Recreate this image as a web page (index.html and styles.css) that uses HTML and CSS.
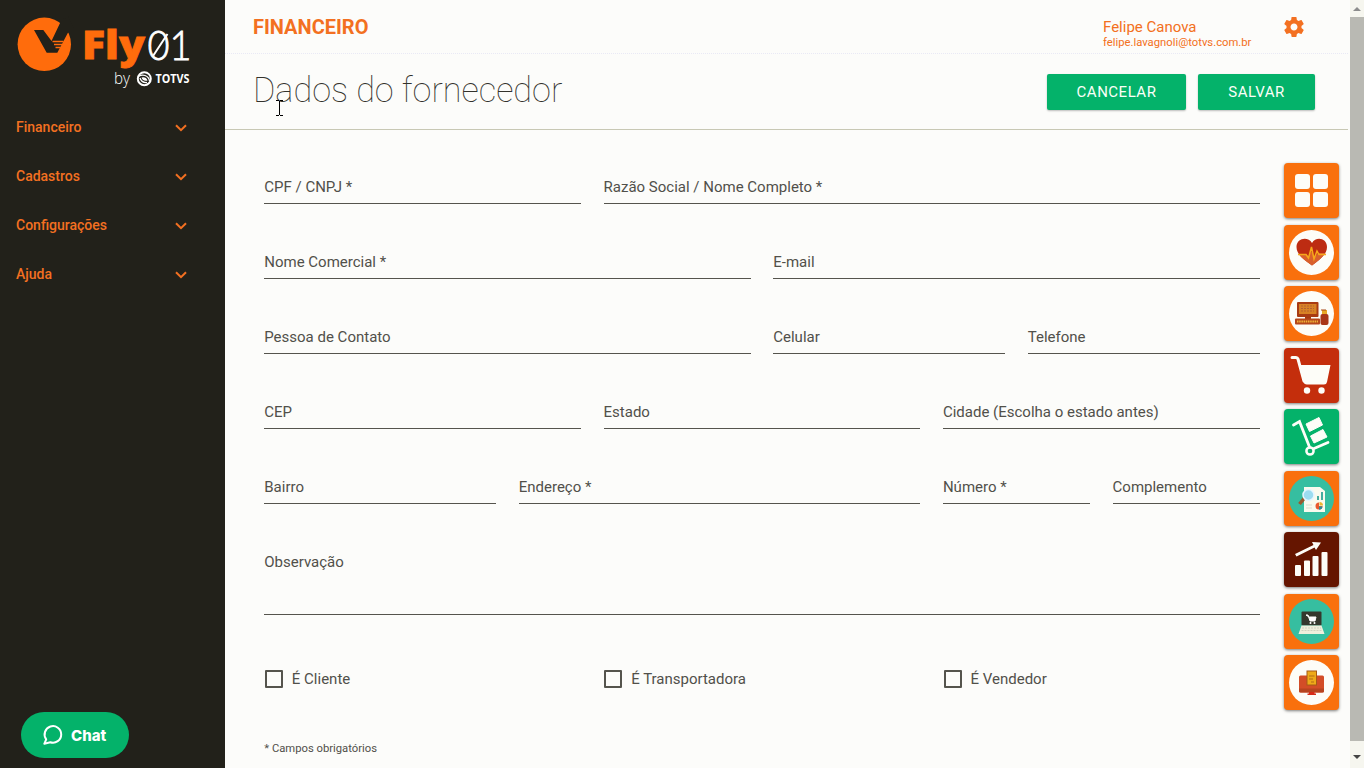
FILE: index.html
```html
<!DOCTYPE html>
<html lang="pt-BR">
<head>
<meta charset="utf-8">
<title>Fly01 Financeiro</title>
<link rel="stylesheet" href="styles.css">
</head>
<body>
<aside class="sidebar">
  <svg class="logo" viewBox="0 0 225 102" width="225" height="102">
    <circle cx="44.300" cy="44.300" r="26.700" fill="#ff6c0c"/>
    <path d="M34 30H43.300L51.500 41L61 21L68 16L74 28L67.800 33L57.300 52.700H46.700z" fill="#22211a"/>
    <path d="M52.500 41.500H63.500M54 44.500H62M55.500 47.500H60.500" stroke="#ff6c0c" stroke-width="1.400"/>
    <text class="logo-fly" x="82" y="59" textLength="63" lengthAdjust="spacingAndGlyphs">Fly</text>
    <text class="logo-num" x="147.500" y="60" textLength="44" lengthAdjust="spacingAndGlyphs">01</text>
    <path d="M153 56L167.500 34" stroke="#fff" stroke-width="2"/>
    <text class="logo-by" x="114" y="84" textLength="16" lengthAdjust="spacingAndGlyphs">by</text>
    <circle cx="144.300" cy="78.700" r="6.500" fill="none" stroke="#fff" stroke-width="2"/>
    <path d="M138.500 76.500Q141.500 74.500 145 75.500Q149 77 149.500 81M140 78Q141.500 83 147 82.500" fill="none" stroke="#fff" stroke-width="1.300"/>
    <path d="M141.500 77.500Q146 76.500 147.500 80.500Q143 81.500 141.500 77.500z" fill="#fff"/>
    <text class="logo-totvs" x="155.500" y="82.500" textLength="34" lengthAdjust="spacingAndGlyphs">TOTVS</text>
  </svg>
  <nav class="menu">
    <a class="menu-item">Financeiro<svg class="chev" viewBox="0 0 12 8"><path d="M1 1.200L6 6.200L11 1.200"/></svg></a>
    <a class="menu-item">Cadastros<svg class="chev" viewBox="0 0 12 8"><path d="M1 1.200L6 6.200L11 1.200"/></svg></a>
    <a class="menu-item">Configurações<svg class="chev" viewBox="0 0 12 8"><path d="M1 1.200L6 6.200L11 1.200"/></svg></a>
    <a class="menu-item">Ajuda<svg class="chev" viewBox="0 0 12 8"><path d="M1 1.200L6 6.200L11 1.200"/></svg></a>
  </nav>
  <button class="chat"><svg width="22" height="22" viewBox="0 0 22 22"><path d="M4.200 15.300A8.300 8.300 0 1 1 8.300 18.300L2.300 19.800z" fill="none" stroke="#fff" stroke-width="2" stroke-linejoin="round"/></svg>Chat</button>
</aside>
<main class="main">
  <header class="topbar">
    <span class="module">FINANCEIRO</span>
    <div class="user"><span class="user-name">Felipe Canova</span><span class="user-mail">felipe.lavagnoli@totvs.com.br</span></div>
    <svg class="gear" viewBox="0 0 24 24"><path d="M19.430 12.980c.04-.32.07-.64.07-.98s-.03-.66-.07-.98l2.110-1.650c.19-.15.24-.42.12-.64l-2-3.460c-.12-.22-.39-.3-.61-.22l-2.490 1c-.52-.4-1.080-.73-1.690-.98l-.38-2.650C14.460 2.180 14.250 2 14 2h-4c-.25 0-.46.18-.49.42l-.38 2.650c-.61.25-1.170.59-1.690.98l-2.490-1c-.23-.09-.49 0-.61.22l-2 3.460c-.13.22-.07.49.12.64l2.110 1.650c-.04.32-.07.65-.07.98s.03.66.07.98l-2.110 1.650c-.19.15-.24.42-.12.64l2 3.460c.12.22.39.3.61.22l2.490-1c.52.4 1.080.73 1.690.98l.38 2.650c.03.24.24.42.49.42h4c.25 0 .46-.18.49-.42l.38-2.650c.61-.25 1.170-.59 1.690-.98l2.490 1c.23.09.49 0 .61-.22l2-3.460c.12-.22.07-.49-.12-.64l-2.110-1.650zM12 15.500c-1.930 0-3.500-1.570-3.500-3.500s1.570-3.500 3.500-3.500 3.500 1.570 3.500 3.500-1.570 3.500-3.500 3.500z"/></svg>
  </header>
  <section class="titlebar">
    <h1>Dados do fornecedor</h1>
    <div class="actions"><button class="btn cancel">CANCELAR</button><button class="btn save">SALVAR</button></div>
    <svg class="cursor" width="7" height="16" viewBox="0 0 7 16"><path d="M0 .5H3M4 .5H7M3.500 1V15M0 15.500H3M4 15.500H7"/></svg>
  </section>
  <div class="content">
    <form class="form">
      <label class="field s4">CPF / CNPJ *</label><label class="field s8">Razão Social / Nome Completo *</label>
      <label class="field s6">Nome Comercial *</label><label class="field s6">E-mail</label>
      <label class="field s6">Pessoa de Contato</label><label class="field s3">Celular</label><label class="field s3">Telefone</label>
      <label class="field s4">CEP</label><label class="field s4">Estado</label><label class="field s4">Cidade (Escolha o estado antes)</label>
      <label class="field s3">Bairro</label><label class="field s5">Endereço *</label><label class="field s2">Número *</label><label class="field s2">Complemento</label>
      <label class="field s12 area">Observação</label>
      <label class="check s4"><i class="box"></i>É Cliente</label><label class="check s4"><i class="box"></i>É Transportadora</label><label class="check s4"><i class="box"></i>É Vendedor</label>
      <small class="note s12">* Campos obrigatórios</small>
    </form>
    <div class="tiles">
      <svg class="tile orange" viewBox="0 0 55 55"><g fill="#fdfdf8"><rect x="11" y="11" width="15" height="15" rx="3"/><rect x="29" y="11" width="15" height="15" rx="3"/><rect x="11" y="29" width="15" height="15" rx="3"/><rect x="29" y="29" width="15" height="15" rx="3"/></g></svg>
      <svg class="tile orange" viewBox="0 0 55 55"><circle cx="27.500" cy="27.500" r="22.500" fill="#fdfdf8"/><path d="M28 40.500C21 35 12.500 30 12.500 22C12.500 13 24 11 28 18C32 11 43 13 43 22C43 30 35 35 28 40.500z" fill="#bd2c12"/><path d="M14.500 29H22L25 32L27 26L31 32L34 28H41.500Q37 34 28 40.500Q18 34 14.500 29z" fill="#d9602c"/><path d="M14 29.500H22L24.500 33L27.500 22L30 34L33 26L35 29.500H42" fill="none" stroke="#f6a81c" stroke-width="1.500"/></svg>
      <svg class="tile orange" viewBox="0 0 55 55"><circle cx="27.500" cy="27.500" r="22.500" fill="#fdfdf8"/><rect x="13" y="16" width="21.500" height="15" rx="1" fill="#a83b13"/><rect x="15" y="18" width="17.500" height="10" fill="#d88225"/><path d="M17 20H30M17 22.500H30M17 25H30" stroke="#b46032" stroke-dasharray="2 1"/><path d="M21 30H27V33H21z" fill="#a83b13"/><rect x="11" y="32.500" width="25" height="6" rx="1" fill="#b5471b"/><path d="M13 35.500H34" stroke="#efb338" stroke-width="2" stroke-dasharray="1.500 .7"/><path d="M38 24H43V28.500H38z" fill="#e9a925"/><rect x="36.500" y="28" width="8" height="11" rx="2" fill="#a93718"/><path d="M37 24H42" stroke="#a84917" stroke-width="1.200"/></svg>
      <svg class="tile red" viewBox="0 0 55 55"><path d="M8 9.500H12Q13.500 9.500 14 11L20 33" fill="none" stroke="#fdfdf8" stroke-width="3" stroke-linecap="round"/><path d="M15 17H46.500L43 34Q42.500 36.500 40 36.500H23Q20 36.500 19 33z" fill="#fdfdf8"/><circle cx="23" cy="42.500" r="3.200" fill="#fdfdf8"/><circle cx="37.500" cy="42.500" r="3.200" fill="#fdfdf8"/></svg>
      <svg class="tile green" viewBox="0 0 55 55"><path d="M9.500 16L15.500 12.500L25.500 38M30 39.500L44 33.500" fill="none" stroke="#fdfdf8" stroke-width="2.800" stroke-linecap="round"/><path d="M22 15L35 8.500L38.500 16L25.500 22.500z" fill="#fdfdf8" stroke="#fdfdf8" stroke-linejoin="round"/><path d="M26.500 27L39 20.500L43 28L30 34z" fill="#fdfdf8" stroke="#fdfdf8" stroke-linejoin="round"/><circle cx="26" cy="42" r="3.600" fill="none" stroke="#fdfdf8" stroke-width="2.500"/></svg>
      <svg class="tile orange" viewBox="0 0 55 55"><circle cx="27.500" cy="27.500" r="22.500" fill="#36bea0"/><path d="M20 16H36L41 20V41H20z" fill="#f9faee"/><path d="M20.500 27L15.500 33" stroke="#985a2d" stroke-width="3.500"/><circle cx="24.500" cy="24" r="5.500" fill="#9cdcf0" stroke="#e5f6ff" stroke-width="1.500"/><path d="M34 29V25M38 29V21" stroke="#269e91" stroke-width="1.700"/><path d="M35 35V31.500A3.500 3.500 0 1 0 38.500 35z" fill="#e9592d"/><path d="M35.500 34.500V31A3.500 3.500 0 0 1 39 34.500z" fill="#ebb630"/><path d="M35 35.500H38.500A3.500 3.500 0 0 1 35 38.700z" fill="#298f9d"/><path d="M22 34H28M22 37H28" stroke="#d9decf"/></svg>
      <svg class="tile brown" viewBox="0 0 55 55"><g fill="#fdfdf8"><rect x="11" y="33" width="6" height="11" rx="1"/><rect x="20" y="28.500" width="6" height="15.500" rx="1"/><rect x="28.500" y="24" width="6" height="20" rx="1"/><rect x="37.500" y="20" width="6" height="24" rx="1"/><path d="M11 22L29.500 13L28 10L37 10.500L32 18L30.500 15.500L12.500 24.500z"/></g></svg>
      <svg class="tile orange" viewBox="0 0 55 55"><circle cx="27.500" cy="27.500" r="22.500" fill="#36bea0"/><rect x="17.500" y="17.500" width="20" height="14" rx="1" fill="#34382d"/><path d="M17.500 31.500H37.500L40.500 40H14.500z" fill="#eeefdc"/><path d="M18 34H37M17.500 36.500H38" stroke="#d0d2c0" stroke-dasharray="2 1"/><path d="M22 21H24L26 27H31L32 23H25z" fill="#fff" stroke="#fff"/><circle cx="26.500" cy="29" r="1" fill="#fff"/><circle cx="30.500" cy="29" r="1" fill="#fff"/></svg>
      <svg class="tile orange" viewBox="0 0 55 55"><circle cx="27.500" cy="27.500" r="22.500" fill="#fdfdf8"/><rect x="15" y="20.500" width="25" height="17" rx="1.500" fill="#d34d27"/><path d="M15 33.500H40V36Q40 37.500 38 37.500H17Q15 37.500 15 36z" fill="#b74420"/><path d="M25 37H30.500V38.500H32V40H23.500V38.500H25z" fill="#d72c18"/><rect x="23" y="16" width="9.500" height="14" fill="#eeaa18" stroke="#a65a16"/><path d="M25 21H30.500M25 24H29M27 27H30" stroke="#b16b18"/></svg>
    </div>
  </div>
</main>
<div class="scrollbar"><i class="arrow up"></i><div class="thumb"></div><i class="arrow down"></i></div>
</body>
</html>
```
FILE: styles.css
```css
* { box-sizing: border-box; }
body { margin: 0; display: flex; width: 1364px; height: 768px; overflow: hidden; font-family: Roboto, sans-serif; font-size: 15px; color: #51504a; background: #fcfcfa; }
button { border: 0; font-family: inherit; }
.sidebar { width: 225px; height: 768px; flex: none; display: flex; flex-direction: column; background: #22211a; }
.logo { display: block; flex: none; }
.logo-fly { font: 800 39px "Open Sans", sans-serif; fill: #ff6c0c; stroke: #ff6c0c; stroke-width: .8; }
.logo-num { font: 300 41px Lato, sans-serif; fill: #fff; stroke: #fff; stroke-width: .8; }
.logo-by { font: 300 16px "Open Sans", sans-serif; fill: #fff; }
.logo-totvs { font: 700 11.5px "Open Sans", sans-serif; fill: #fff; }
.menu { display: flex; flex-direction: column; }
.menu-item { display: flex; align-items: center; justify-content: space-between; height: 49px; padding: 0 38px 0 16px; color: #f37021; font-size: 14px; font-weight: 500; }
.chev { width: 12px; height: 8px; margin-top: 2px; fill: none; stroke: #f37021; stroke-width: 2; }
.chat { display: flex; align-items: center; gap: 7px; width: 108px; height: 46px; margin: auto 0 10px 21px; padding: 0 0 0 21px; border-radius: 23px; background: #04b26a; color: #fff; font: 800 15px Inter, sans-serif; }
.main { width: 1123px; flex: none; }
.topbar { display: flex; height: 54px; padding-left: 28px; border-bottom: 1px dotted #e9e9f5; color: #f37021; }
.module { width: 850px; padding-top: 15px; font-size: 20px; font-weight: 700; line-height: 24px; }
.user { display: flex; flex-direction: column; width: 180px; padding-top: 18px; }
.user-name { line-height: 18px; }
.user-mail { font-size: 11.25px; line-height: 13px; }
.gear { width: 24px; height: 24px; margin-top: 15px; margin-left: -1px; fill: #f37021; }
.titlebar { position: relative; display: flex; justify-content: space-between; height: 76px; padding: 0 33px 0 28px; border-bottom: 1px solid #c8c8b4; }
h1 { margin: 13px 0 0; font-size: 34.2px; font-weight: 100; line-height: 47px; color: #33322c; }
.actions { display: flex; gap: 12px; padding-top: 20px; }
.btn { height: 36px; padding: 0; border-radius: 2px; background: #04b26a; color: #fbfff8; font-size: 15px; font-weight: 400; letter-spacing: .5px; box-shadow: 0 1px 2px rgba(0,0,0,.25); }
.cancel { width: 139px; }
.save { width: 117px; }
.cursor { position: absolute; left: 51px; top: 46px; stroke: #000; stroke-width: 1; shape-rendering: crispEdges; }
.content { display: flex; }
.form { display: grid; grid-template-columns: repeat(12, 1fr); grid-template-rows: 74px repeat(4, 75px) 111px 89px 52px; column-gap: 22.5px; width: 995.5px; margin: 0 .25px 0 39.25px; flex: none; align-items: end; align-content: start; }
.field { height: 29px; padding-top: 3px; border-bottom: 1px solid #55544d; line-height: 18px; white-space: nowrap; }
.area { height: 65px; }
.s2 { grid-column: span 2; }
.s3 { grid-column: span 3; }
.s4 { grid-column: span 4; }
.s5 { grid-column: span 5; }
.s6 { grid-column: span 6; }
.s8 { grid-column: span 8; }
.s12 { grid-column: span 12; }
.check { display: flex; align-items: center; gap: 9px; height: 50px; padding-left: .6px; }
.box { width: 18px; height: 18px; border: 2px solid #55544d; border-radius: 1px; }
.note { font-size: 11.25px; line-height: 14px; }
.tiles { display: flex; flex-direction: column; gap: 6.5px; margin: 33px 0 0 24px; }
.tile { width: 55px; height: 55px; border-radius: 4px; box-shadow: 0 1px 3px rgba(0,0,0,.5); }
.orange { background: #f9700d; }
.red { background: #c42e0c; }
.green { background: #04b26a; }
.brown { background: #651500; }
.scrollbar { display: flex; flex-direction: column; align-items: center; width: 14px; height: 768px; margin-left: 2px; background: #f6f6ef; }
.thumb { width: 14px; height: 724px; margin: 6px 0 auto; background: #b9b9b3; }
.arrow { width: 0; height: 0; border: 4px solid transparent; }
.up { margin-top: 3px; border-bottom-color: #8c8c8c; }
.down { margin-bottom: 5px; border-top-color: #444; }
```
